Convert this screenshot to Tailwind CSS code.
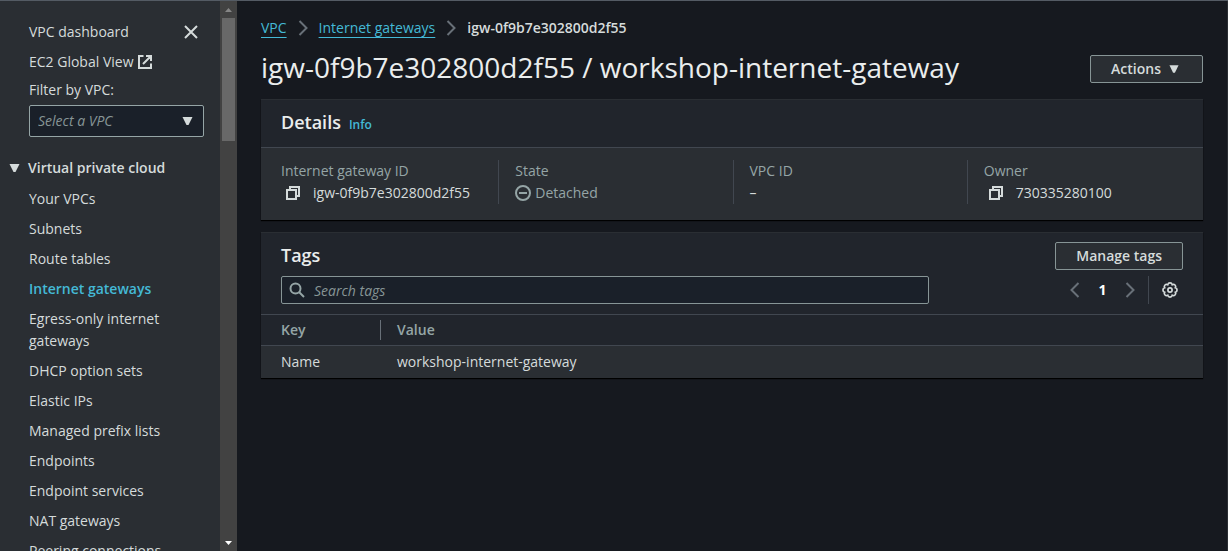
<!DOCTYPE html>
<html lang="en">
<head>
<meta charset="utf-8">
<meta name="viewport" content="width=device-width, initial-scale=1">
<title>Internet gateways | VPC</title>
<script src="https://cdn.jsdelivr.net/npm/@tailwindcss/browser@4"></script>
</head>
<body class="flex h-screen overflow-hidden border-t border-[#545b64] bg-[#16191f] font-['Open_Sans','Noto_Sans',sans-serif] text-sm leading-[22px] text-[#d5dbdb]">

<aside class="flex w-[237px] shrink-0">
  <nav aria-label="VPC" class="flex-1 overflow-hidden bg-[#2a2e33] pt-5 pr-4 pl-[29px]">
    <div class="flex items-center justify-between">
      <a href="#">VPC dashboard</a>
      <button type="button" aria-label="Close navigation" class="mr-[3px] flex size-5 items-center justify-center">
        <svg class="size-4" viewBox="0 0 16 16" fill="none" stroke="currentColor" stroke-width="2"><path d="M2 2l12 12M14 2L2 14"/></svg>
      </button>
    </div>
    <a href="#" class="mt-2 flex items-center gap-1">EC2 Global View
      <svg class="size-4" viewBox="0 0 16 16" fill="none" stroke="currentColor" stroke-width="2"><path d="M14 9.500V14H2V2h4.500M9 2h5v5M6 10l7.500-7.500"/></svg>
    </a>
    <label for="vpc-filter" class="mt-[6px] block">Filter by VPC:</label>
    <div class="relative mt-1">
      <select id="vpc-filter" class="h-8 w-full appearance-none rounded-[2px] border border-[#95a5a6] bg-[#1a2029] px-2 text-[#879596] italic">
        <option>Select a VPC</option>
      </select>
      <svg class="pointer-events-none absolute top-3 right-[11px] h-2 w-[11px]" viewBox="0 0 11 8" fill="currentColor"><path d="M.5 0h10L6.500 8h-2z"/></svg>
    </div>
    <button type="button" aria-expanded="true" class="mt-5 -ml-5 flex items-center gap-2 font-semibold">
      <svg class="h-2 w-[11px]" viewBox="0 0 11 8" fill="currentColor"><path d="M.5 0h10L6.500 8h-2z"/></svg>
      Virtual private cloud
    </button>
    <ul class="mt-[9px] flex flex-col gap-2 pr-6">
      <li><a href="#">Your VPCs</a></li>
      <li><a href="#">Subnets</a></li>
      <li><a href="#">Route tables</a></li>
      <li><a href="#" aria-current="page" class="font-semibold text-[#44b9d6]">Internet gateways</a></li>
      <li><a href="#">Egress-only internet gateways</a></li>
      <li><a href="#">DHCP option sets</a></li>
      <li><a href="#">Elastic IPs</a></li>
      <li><a href="#">Managed prefix lists</a></li>
      <li><a href="#">Endpoints</a></li>
      <li><a href="#">Endpoint services</a></li>
      <li><a href="#">NAT gateways</a></li>
      <li><a href="#">Peering connections</a></li>
    </ul>
  </nav>
  <!-- Scroll bar of the navigation -->
  <div aria-hidden="true" class="flex w-[17px] flex-col items-center bg-[#424242]">
    <svg class="h-[17px] w-[17px] shrink-0" viewBox="0 0 17 17" fill="#868686"><path d="M5 11l3.500-4 3.500 4z"/></svg>
    <div class="h-[123px] w-[13px] bg-[#686868]"></div>
    <svg class="mt-auto h-[17px] w-[17px] shrink-0" viewBox="0 0 17 17" fill="#ffffff"><path d="M5 7h7l-3.500 4z"/></svg>
  </div>
</aside>

<main class="min-w-0 flex-1 border-r border-[#2a2e33] px-6 pt-4">
  <nav aria-label="Breadcrumbs">
    <ol class="flex items-center gap-2">
      <li><a href="#" class="text-[#44b9d6] underline underline-offset-4">VPC</a></li>
      <li aria-hidden="true"><svg class="size-4 text-[#687078]" viewBox="0 0 16 16" fill="none" stroke="currentColor" stroke-width="2"><path d="M4.500 1l7 7-7 7"/></svg></li>
      <li><a href="#" class="text-[#44b9d6] underline underline-offset-4">Internet gateways</a></li>
      <li aria-hidden="true"><svg class="size-4 text-[#687078]" viewBox="0 0 16 16" fill="none" stroke="currentColor" stroke-width="2"><path d="M4.500 1l7 7-7 7"/></svg></li>
      <li class="font-semibold">igw-0f9b7e302800d2f55</li>
    </ol>
  </nav>

  <div class="mt-[10px] flex items-center justify-between">
    <h1 class="text-[28px] leading-9 text-[#eaeded]">igw-0f9b7e302800d2f55 / workshop-internet-gateway</h1>
    <button type="button" class="mt-[3px] flex h-7 items-center gap-2 rounded-[2px] border border-[#879596] bg-[#2a2e33] px-5 font-semibold">Actions
      <svg class="mr-[3px] h-2 w-[10px]" viewBox="0 0 11 8" fill="currentColor"><path d="M.5 0h10L6.500 8h-2z"/></svg>
    </button>
  </div>

  <section class="mt-[14px] border-t border-[#2a2e33] bg-[#2a2e33] shadow-[0_1px_1px_#000]">
    <header class="flex items-baseline gap-2 border-b border-[#414750] bg-[#21252c] px-5 pt-2 pb-[11px]">
      <h2 class="text-lg leading-7 font-semibold text-[#eaeded]">Details</h2>
      <a href="#" class="text-xs font-semibold text-[#44b9d6]">Info</a>
    </header>
    <dl class="grid grid-cols-4 pt-3 pr-[2px] pb-4 pl-[3px]">
      <div class="border-l border-transparent pl-4">
        <dt class="text-[#95a5a6]">Internet gateway ID</dt>
        <dd class="flex items-center gap-3 pl-1">
          <button type="button" aria-label="Copy internet gateway ID"><svg class="size-4" viewBox="0 0 16 16" fill="none" stroke="currentColor" stroke-width="2"><path d="M2 5h9v9H2zM5 5V2h9v9h-3"/></svg></button>
          igw-0f9b7e302800d2f55
        </dd>
      </div>
      <div class="border-l border-[#414750] pl-4">
        <dt class="text-[#95a5a6]">State</dt>
        <dd class="flex items-center gap-1 text-[#95a5a6]">
          <svg class="size-4" viewBox="0 0 16 16" fill="none" stroke="currentColor" stroke-width="2"><circle cx="8" cy="8" r="7"/><path d="M4 8h8"/></svg>
          Detached
        </dd>
      </div>
      <div class="border-l border-[#414750] pl-4">
        <dt class="text-[#95a5a6]">VPC ID</dt>
        <dd>–</dd>
      </div>
      <div class="border-l border-[#414750] pl-4">
        <dt class="text-[#95a5a6]">Owner</dt>
        <dd class="flex items-center gap-3 pl-1">
          <button type="button" aria-label="Copy owner"><svg class="size-4" viewBox="0 0 16 16" fill="none" stroke="currentColor" stroke-width="2"><path d="M2 5h9v9H2zM5 5V2h9v9h-3"/></svg></button>
          730335280100
        </dd>
      </div>
    </dl>
  </section>

  <section class="mt-3 border-t border-[#2a2e33] bg-[#21252c] shadow-[0_1px_1px_#000]">
    <header class="flex items-end justify-between px-5 pt-2">
      <h2 class="mb-px self-start text-lg leading-7 font-semibold text-[#eaeded]">Tags</h2>
      <button type="button" class="mt-px h-7 rounded-[2px] border border-[#879596] bg-[#2a2e33] px-5 leading-[26px] font-semibold">Manage tags</button>
    </header>
    <div class="mt-[6px] flex items-center justify-between px-5">
      <label class="flex h-7 max-w-[648px] flex-1 items-center gap-2 rounded-[2px] border border-[#879596] bg-[#1a2029] px-[7px]">
        <svg class="size-4 shrink-0 text-[#95a5a6]" viewBox="0 0 16 16" fill="none" stroke="currentColor" stroke-width="2"><circle cx="6.500" cy="6.500" r="5"/><path d="M10 10l5 5"/></svg>
        <span class="sr-only">Search tags</span>
        <input type="text" placeholder="Search tags" class="h-full min-w-0 flex-1 bg-transparent pl-px outline-none placeholder:leading-[22px] placeholder:text-[#879596] placeholder:italic">
      </label>
      <div class="flex h-7 items-center">
        <button type="button" aria-label="Previous page" class="text-[#687078]"><svg class="size-4" viewBox="0 0 16 16" fill="none" stroke="currentColor" stroke-width="2"><path d="M11.500 1l-7 7 7 7"/></svg></button>
        <button type="button" aria-current="page" class="w-[39px] text-center font-bold text-white">1</button>
        <button type="button" aria-label="Next page" class="text-[#687078]"><svg class="size-4" viewBox="0 0 16 16" fill="none" stroke="currentColor" stroke-width="2"><path d="M4.500 1l7 7-7 7"/></svg></button>
        <span class="ml-[10px] h-full border-l border-[#414750]"></span>
        <button type="button" aria-label="Preferences" class="mr-[5px] ml-[13px]"><svg class="size-4" viewBox="0 0 16 16" fill="none" stroke="currentColor" stroke-width="1.700"><path d="M10.220 2.640A2.300 2.300 0 0 1 13.360 5.780A2.300 2.300 0 0 1 13.360 10.220A2.300 2.300 0 0 1 10.220 13.360A2.300 2.300 0 0 1 5.780 13.360A2.300 2.300 0 0 1 2.640 10.220A2.300 2.300 0 0 1 2.640 5.780A2.300 2.300 0 0 1 5.780 2.640A2.300 2.300 0 0 1 10.220 2.640Z"/><circle cx="8" cy="8" r="2.100"/></svg></button>
      </div>
    </div>
    <table class="mt-[10px] w-full border-collapse text-left">
      <thead>
        <tr class="h-[31px] border-y border-[#414750] text-[#95a5a6]">
          <th scope="col" class="w-[120px] p-0 font-semibold"><div class="border-r border-[#687078] pl-5 leading-5">Key</div></th>
          <th scope="col" class="p-0 pl-4 font-semibold">Value</th>
        </tr>
      </thead>
      <tbody class="bg-[#2a2e33]">
        <tr class="h-8">
          <td class="p-0 pl-5">Name</td>
          <td class="p-0 pl-4">workshop-internet-gateway</td>
        </tr>
      </tbody>
    </table>
  </section>
</main>
</body>
</html>
